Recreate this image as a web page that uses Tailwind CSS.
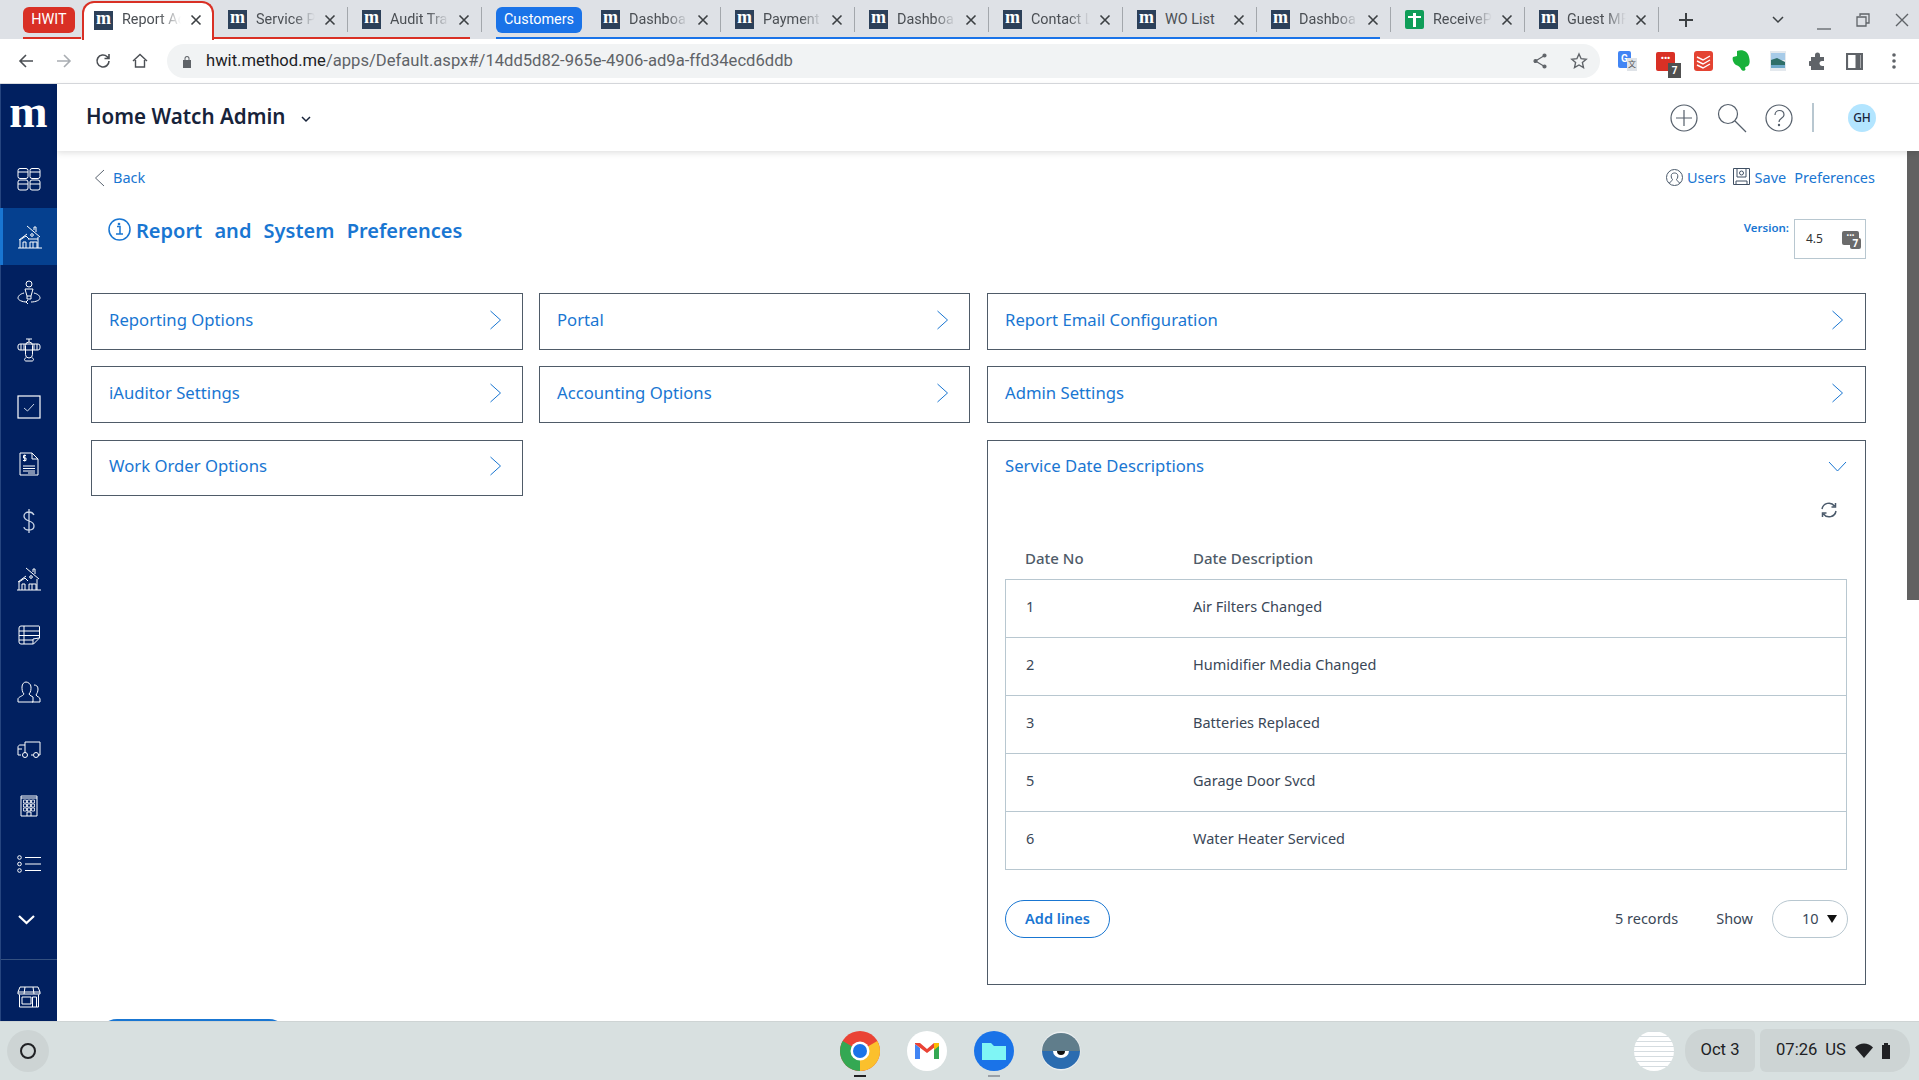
<!DOCTYPE html>
<html lang="en">
<head>
    <meta charset="UTF-8">
    <title>Report and System Preferences</title>
    <script src="https://cdn.jsdelivr.net/npm/@tailwindcss/browser@4"></script>
</head>
<body class="bg-white h-screen w-screen overflow-hidden flex flex-col font-['Noto_Sans',sans-serif]">

    <!-- tab strip -->
    <div class="relative h-[39px] shrink-0 bg-[#dee1e6] flex items-center pl-[23px] font-['Roboto',sans-serif] text-[14.4px] text-[#4b4f54]">
        <div class="absolute left-[23px] bottom-0 w-[58px] h-[2px] bg-[#d93025]"></div>
        <div class="absolute left-[214px] bottom-0 w-[256px] h-[2px] bg-[#d93025]"></div>
        <div class="absolute left-[496px] bottom-0 w-[884px] h-[2px] bg-[#1a73e8]"></div>

        <div class="w-[52px] h-[26px] rounded-md bg-[#d93025] text-white flex items-center justify-center">HWIT</div>

        <div class="ml-[7px] w-[132px] h-[39px] bg-white border-2 border-b-0 border-[#d93025] rounded-t-xl flex items-center pl-[10px] pb-[2px] -mb-[1px]">
            <div class="w-[19px] h-[19px] bg-[#2c4059] text-white font-['Liberation_Serif'] font-bold text-[18px] leading-[15px] text-center shrink-0">m</div>
            <div class="ml-[9px] w-[62px] overflow-hidden whitespace-nowrap [mask-image:linear-gradient(to_right,black_60%,transparent_95%)]">Report Ac</div>
            <svg class="ml-[6px] w-3 h-3 shrink-0" viewBox="0 0 12 12" stroke="#3c4043" stroke-width="1.6"><path d="M1.5 1.5l9 9M10.5 1.5l-9 9"/></svg>
        </div>

        <div class="w-[134px] h-[25px] flex items-center pl-[14px] border-r border-[#a3a7ac]">
            <div class="w-[19px] h-[19px] bg-[#2c4059] text-white font-['Liberation_Serif'] font-bold text-[18px] leading-[15px] text-center shrink-0">m</div>
            <div class="ml-[9px] w-[62px] overflow-hidden whitespace-nowrap [mask-image:linear-gradient(to_right,black_60%,transparent_95%)]">Service P</div>
            <svg class="ml-[6px] w-3 h-3 shrink-0" viewBox="0 0 12 12" stroke="#3c4043" stroke-width="1.6"><path d="M1.5 1.5l9 9M10.5 1.5l-9 9"/></svg>
        </div>
        <div class="w-[134px] h-[25px] flex items-center pl-[14px] border-r border-[#a3a7ac]">
            <div class="w-[19px] h-[19px] bg-[#2c4059] text-white font-['Liberation_Serif'] font-bold text-[18px] leading-[15px] text-center shrink-0">m</div>
            <div class="ml-[9px] w-[62px] overflow-hidden whitespace-nowrap [mask-image:linear-gradient(to_right,black_60%,transparent_95%)]">Audit Tra</div>
            <svg class="ml-[6px] w-3 h-3 shrink-0" viewBox="0 0 12 12" stroke="#3c4043" stroke-width="1.6"><path d="M1.5 1.5l9 9M10.5 1.5l-9 9"/></svg>
        </div>

        <div class="ml-[14px] w-[86px] h-[26px] rounded-md bg-[#1a73e8] text-white flex items-center justify-center">Customers</div>

        <div class="ml-[5px] w-[134px] h-[25px] flex items-center pl-[14px] border-r border-[#a3a7ac]">
            <div class="w-[19px] h-[19px] bg-[#2c4059] text-white font-['Liberation_Serif'] font-bold text-[18px] leading-[15px] text-center shrink-0">m</div>
            <div class="ml-[9px] w-[62px] overflow-hidden whitespace-nowrap [mask-image:linear-gradient(to_right,black_60%,transparent_95%)]">Dashboa</div>
            <svg class="ml-[6px] w-3 h-3 shrink-0" viewBox="0 0 12 12" stroke="#3c4043" stroke-width="1.6"><path d="M1.5 1.5l9 9M10.5 1.5l-9 9"/></svg>
        </div>
        <div class="w-[134px] h-[25px] flex items-center pl-[14px] border-r border-[#a3a7ac]">
            <div class="w-[19px] h-[19px] bg-[#2c4059] text-white font-['Liberation_Serif'] font-bold text-[18px] leading-[15px] text-center shrink-0">m</div>
            <div class="ml-[9px] w-[62px] overflow-hidden whitespace-nowrap [mask-image:linear-gradient(to_right,black_60%,transparent_95%)]">Payment</div>
            <svg class="ml-[6px] w-3 h-3 shrink-0" viewBox="0 0 12 12" stroke="#3c4043" stroke-width="1.6"><path d="M1.5 1.5l9 9M10.5 1.5l-9 9"/></svg>
        </div>
        <div class="w-[134px] h-[25px] flex items-center pl-[14px] border-r border-[#a3a7ac]">
            <div class="w-[19px] h-[19px] bg-[#2c4059] text-white font-['Liberation_Serif'] font-bold text-[18px] leading-[15px] text-center shrink-0">m</div>
            <div class="ml-[9px] w-[62px] overflow-hidden whitespace-nowrap [mask-image:linear-gradient(to_right,black_60%,transparent_95%)]">Dashboa</div>
            <svg class="ml-[6px] w-3 h-3 shrink-0" viewBox="0 0 12 12" stroke="#3c4043" stroke-width="1.6"><path d="M1.5 1.5l9 9M10.5 1.5l-9 9"/></svg>
        </div>
        <div class="w-[134px] h-[25px] flex items-center pl-[14px] border-r border-[#a3a7ac]">
            <div class="w-[19px] h-[19px] bg-[#2c4059] text-white font-['Liberation_Serif'] font-bold text-[18px] leading-[15px] text-center shrink-0">m</div>
            <div class="ml-[9px] w-[62px] overflow-hidden whitespace-nowrap [mask-image:linear-gradient(to_right,black_60%,transparent_95%)]">Contact L</div>
            <svg class="ml-[6px] w-3 h-3 shrink-0" viewBox="0 0 12 12" stroke="#3c4043" stroke-width="1.6"><path d="M1.5 1.5l9 9M10.5 1.5l-9 9"/></svg>
        </div>
        <div class="w-[134px] h-[25px] flex items-center pl-[14px] border-r border-[#a3a7ac]">
            <div class="w-[19px] h-[19px] bg-[#2c4059] text-white font-['Liberation_Serif'] font-bold text-[18px] leading-[15px] text-center shrink-0">m</div>
            <div class="ml-[9px] w-[62px] overflow-hidden whitespace-nowrap">WO List</div>
            <svg class="ml-[6px] w-3 h-3 shrink-0" viewBox="0 0 12 12" stroke="#3c4043" stroke-width="1.6"><path d="M1.5 1.5l9 9M10.5 1.5l-9 9"/></svg>
        </div>
        <div class="w-[134px] h-[25px] flex items-center pl-[14px] border-r border-[#a3a7ac]">
            <div class="w-[19px] h-[19px] bg-[#2c4059] text-white font-['Liberation_Serif'] font-bold text-[18px] leading-[15px] text-center shrink-0">m</div>
            <div class="ml-[9px] w-[62px] overflow-hidden whitespace-nowrap [mask-image:linear-gradient(to_right,black_60%,transparent_95%)]">Dashboa</div>
            <svg class="ml-[6px] w-3 h-3 shrink-0" viewBox="0 0 12 12" stroke="#3c4043" stroke-width="1.6"><path d="M1.5 1.5l9 9M10.5 1.5l-9 9"/></svg>
        </div>
        <div class="w-[134px] h-[25px] flex items-center pl-[14px] border-r border-[#a3a7ac]">
            <div class="relative w-[19px] h-[19px] rounded-[2px] bg-[#0f9d58] shrink-0">
                <div class="absolute left-[8px] top-[3px] w-[3px] h-[14px] bg-white"></div>
                <div class="absolute left-[3px] top-[6px] w-[13px] h-[2px] bg-white"></div>
            </div>
            <div class="ml-[9px] w-[62px] overflow-hidden whitespace-nowrap [mask-image:linear-gradient(to_right,black_60%,transparent_95%)]">ReceiveP</div>
            <svg class="ml-[6px] w-3 h-3 shrink-0" viewBox="0 0 12 12" stroke="#3c4043" stroke-width="1.6"><path d="M1.5 1.5l9 9M10.5 1.5l-9 9"/></svg>
        </div>
        <div class="w-[134px] h-[25px] flex items-center pl-[14px] border-r border-[#a3a7ac]">
            <div class="w-[19px] h-[19px] bg-[#2c4059] text-white font-['Liberation_Serif'] font-bold text-[18px] leading-[15px] text-center shrink-0">m</div>
            <div class="ml-[9px] w-[62px] overflow-hidden whitespace-nowrap [mask-image:linear-gradient(to_right,black_60%,transparent_95%)]">Guest MF</div>
            <svg class="ml-[6px] w-3 h-3 shrink-0" viewBox="0 0 12 12" stroke="#3c4043" stroke-width="1.6"><path d="M1.5 1.5l9 9M10.5 1.5l-9 9"/></svg>
        </div>

        <svg class="ml-[19px] w-[16px] h-[16px]" viewBox="0 0 16 16" stroke="#3c4043" stroke-width="2"><path d="M8 1v14M1 8h14"/></svg>
        <svg class="ml-[78px] w-[12px] h-[8px]" viewBox="0 0 12 8" fill="none" stroke="#3c4043" stroke-width="1.5"><path d="M1 1l5 5 5-5"/></svg>
        <svg class="ml-[33px] w-[14px] h-[14px] mt-[8px]" viewBox="0 0 14 14" stroke="#5f6368" stroke-width="1.3"><path d="M0 12h14"/></svg>
        <svg class="ml-[25px] w-[14px] h-[14px]" viewBox="0 0 14 14" fill="none" stroke="#5f6368" stroke-width="1.3"><path d="M4 3V1h9v9h-3M1 4h9v9H1z"/></svg>
        <svg class="ml-[25px] w-[14px] h-[14px]" viewBox="0 0 14 14" stroke="#5f6368" stroke-width="1.4"><path d="M1 1l12 12M13 1L1 13"/></svg>
    </div>

    <!-- address bar -->
    <div class="h-[45px] shrink-0 bg-white border-b border-[#dadce0] flex items-center font-['Roboto',sans-serif]">
        <div class="w-[167px] flex items-center shrink-0 pl-[18px]">
            <svg class="w-4 h-4" viewBox="0 0 16 16" fill="none" stroke="#4b4f54" stroke-width="1.6"><path d="M15 8H2M8 2L2 8l6 6"/></svg>
            <svg class="w-4 h-4 ml-[22px]" viewBox="0 0 16 16" fill="none" stroke="#a9adb2" stroke-width="1.6"><path d="M1 8h13M8 2l6 6-6 6"/></svg>
            <svg class="w-4 h-4 ml-[23px]" viewBox="0 0 16 16" fill="none" stroke="#4b4f54" stroke-width="1.6"><path d="M14 8a6 6 0 1 1-1.8-4.3L14 5.500M14 1v4.500H9.500"/></svg>
            <svg class="w-4 h-4 ml-[21px]" viewBox="0 0 16 16" fill="none" stroke="#4b4f54" stroke-width="1.4"><path d="M1 8l7-6.500L15 8M3.500 7v7h9V7"/></svg>
        </div>
        <div class="w-[1433px] h-[34px] rounded-full bg-[#f1f3f4] flex items-center pl-[15px] pr-[12px] text-[16.6px] shrink-0">
            <svg class="w-[10px] h-[13px]" viewBox="0 0 10 13" fill="#5f6368"><path d="M1 5h8v8H1zM2.500 5V3.500a2.500 2.500 0 0 1 5 0V5h-1V3.500a1.500 1.500 0 0 0-3 0V5z"/></svg>
            <span class="ml-[14px] text-[#202124] whitespace-nowrap">hwit.method.me<span class="text-[#5f6368]">/apps/Default.aspx#/14dd5d82-965e-4906-ad9a-ffd34ecd6ddb</span></span>
            <svg class="ml-auto w-4 h-4" viewBox="0 0 16 16" fill="#5f6368" stroke="#5f6368" stroke-width="1.2"><path d="M12.500 2.500L3.500 8l9 5.500" fill="none"/><circle cx="12.500" cy="2.500" r="1.500"/><circle cx="3.500" cy="8" r="1.500"/><circle cx="12.500" cy="13.500" r="1.500"/></svg>
            <svg class="ml-[22px] w-[18px] h-[18px]" viewBox="0 0 18 18" fill="none" stroke="#5f6368" stroke-width="1.400"><path d="M9 2l2.100 4.700 5.100.500-3.800 3.400 1.100 5L9 13l-4.500 2.600 1.100-5L1.800 7.200l5.100-.500z"/></svg>
        </div>
        <div class="flex items-center pl-[18px] gap-[19px]">
            <div class="relative w-[19px] h-[20px]">
                <div class="w-[13px] h-[17px] rounded-[2px] bg-[#4285f4] text-white text-[10px] font-bold text-center leading-[16px]">G</div>
                <div class="absolute right-0 bottom-0 w-[10px] h-[13px] bg-[#dfe3e8] text-[#555] text-[8px] text-center leading-[12px] font-['Noto_Sans_CJK_SC',sans-serif]">文</div>
            </div>
            <div class="relative w-[19px] h-[19px] rounded-[2px] bg-[#d93025] text-white text-[9px] leading-[13px] text-center font-bold">•••
                <div class="absolute -right-[6px] -bottom-[7px] w-[13px] h-[15px] bg-[#505050] text-white text-[10px] leading-[15px]">7</div>
            </div>
            <svg class="w-[19px] h-[20px]" viewBox="0 0 19 20"><rect width="19" height="20" rx="3" fill="#e44332"/><path d="M3 6l6 3 7-4M3 10l6 3 7-4M3 14l6 3 7-4" fill="none" stroke="#fff" stroke-width="1.4"/></svg>
            <svg class="w-[19px] h-[22px]" viewBox="0 0 19 22"><path d="M5 1c6-2 11 1 12 6 1 4 1 7-1 9-2 1-2 0-3 2 2 3-3 4-4 1-1-2-2-3-5-4-3-2-4-6-3-8l4-1z" fill="#18b13a"/></svg>
            <svg class="w-[16px] h-[20px]" viewBox="0 0 16 20"><rect width="16" height="20" fill="#e4e9ee"/><rect x="1" y="2" width="14" height="7" fill="#a7cbe8"/><path d="M1 9l6-2 8 4v5H1z" fill="#2f6f68"/><rect x="1" y="14" width="14" height="3" fill="#6fa9c9"/></svg>
            <svg class="ml-[4px] w-[18px] h-[18px]" viewBox="0 0 18 18" fill="#5f6368"><path d="M2 5h4V3a2.500 2.500 0 0 1 5 0v2h4v4h-2a2.500 2.500 0 0 0 0 5h2v4H2v-4H1a2.500 2.500 0 0 1 0-5h1z"/></svg>
            <svg class="w-[17px] h-[17px]" viewBox="0 0 17 17" fill="none" stroke="#5f6368" stroke-width="2.200"><path d="M1 1h15v15H1z"/><path d="M12 1v15" stroke-width="5"/></svg>
            <svg class="ml-[10px] w-[4px] h-[16px]" viewBox="0 0 4 16" fill="#5f6368"><circle cx="2" cy="2" r="1.800"/><circle cx="2" cy="8" r="1.800"/><circle cx="2" cy="14" r="1.800"/></svg>
        </div>
    </div>

    <div class="flex-1 flex min-h-0">
        <!-- sidebar -->
        <div class="w-[57px] shrink-0 bg-[#012060] border-l border-[#26457f] text-white flex flex-col">
            <div class="h-[67px] flex items-center justify-center font-['Liberation_Serif'] font-bold text-[46px] leading-none pb-[11px] pr-px">m</div>

            <div class="h-[57px] flex items-center justify-center pb-[2px]">
                <svg class="w-[24px] h-[24px]" viewBox="0 0 24 24" fill="none" stroke="#fff" stroke-width="1"><rect x="1" y="1.500" width="10" height="10" rx="2"/><rect x="13" y="1.500" width="10" height="10" rx="2"/><rect x="1" y="13" width="10" height="10" rx="2"/><rect x="13" y="13" width="10" height="10" rx="2"/><path d="M1 5h10M13 5h10M1 17h10M13 17h10"/></svg>
            </div>
            <div class="h-[57px] flex items-center justify-center bg-[#05408f] border-l-[3px] border-[#1976d2] -ml-px">
                <svg class="w-[24px] h-[24px]" viewBox="0 0 24 24" fill="none" stroke="#fff" stroke-width="1"><path d="M0 23h24M2 23V15l6-4 3 3M1 15l8-6M9 1l13 11M16 5v-3h2v5M20 12v11M5 23v-6h3v6M12 23v-6h7v6M15 17v6"/><circle cx="14" cy="10" r="1.300"/><path d="M10 14h10" /></svg>
            </div>
            <div class="h-[57px] flex items-center justify-center pb-[3px]">
                <svg class="w-[24px] h-[24px]" viewBox="0 0 24 24" fill="none" stroke="#fff" stroke-width="1"><circle cx="12" cy="4" r="3"/><path d="M8 9h8l-2 7h-4zM10 16v3h4v-3M7 13c-4 1-6 3-6 5 0 2 4 4 9 4M17 13c4 1 6 3 6 5 0 2-4 4-9 4M11 20l-2 2 2 2"/></svg>
            </div>
            <div class="h-[57px] flex items-center justify-center pb-[2px]">
                <svg class="w-[24px] h-[24px]" viewBox="0 0 24 24" fill="none" stroke="#fff" stroke-width="1"><rect x="1" y="6" width="22" height="6" rx="2"/><path d="M9 1h6M12 1v3M9 23c-2 0-2-3 0-3M15 23c2 0 2-3 0-3M9 23h6M4 6v6M7 6v6M17 6v6M20 6v6"/><rect x="8.500" y="4" width="7" height="16" rx="3.500"/></svg>
            </div>
            <div class="h-[57px] flex items-center justify-center pb-[2px]">
                <svg class="w-[24px] h-[24px]" viewBox="0 0 24 24" fill="none" stroke="#fff" stroke-width="1"><rect x="1" y="1" width="22" height="22" stroke-width="1.200"/><path d="M7 13l3.500 3L17 9" stroke="#cbd5e6"/></svg>
            </div>
            <div class="h-[57px] flex items-center justify-center pb-[2px]">
                <svg class="w-[20px] h-[24px]" viewBox="0 0 20 24" fill="none" stroke="#fff" stroke-width="1"><path d="M1 1h12l6 6v16H1zM13 1v6h6M4 14h12M4 16.500h12M4 19h12M9 21h7"/><path d="M7 3.500H4.500v2.500H7v2.500H4M5.700 2.500v7" /></svg>
            </div>
            <div class="h-[57px] flex items-center justify-center pb-[2px]">
                <svg class="w-[14px] h-[24px]" viewBox="0 0 14 24" fill="none" stroke="#cbd5e6" stroke-width="1.300"><path d="M12 6c-1-2-3-3-5-3-3 0-5 2-5 4s2 4 5 5 5 2 5 5-2 4-5 4-5-1-5-3M7 0v24"/></svg>
            </div>
            <div class="h-[57px] flex items-center justify-center">
                <svg class="w-[24px] h-[24px]" viewBox="0 0 24 24" fill="none" stroke="#fff" stroke-width="1"><path d="M0 23h24M2 23V15l6-4 3 3M1 15l8-6M9 1l13 11M16 5v-3h2v5M20 12v11M5 23v-6h3v6M12 23v-6h7v6M15 17v6"/><circle cx="14" cy="10" r="1.300"/></svg>
            </div>
            <div class="h-[57px] flex items-center justify-center pb-[2px]">
                <svg class="w-[22px] h-[20px]" viewBox="0 0 22 20" fill="none" stroke="#fff" stroke-width="1"><path d="M3 1h18a1 1 0 0 1 .500.500V13l-6 6H3a2 2 0 0 1-2-2V3a2 2 0 0 1 2-2zM1 6h20M1 10.500h20M1 15h14M6 1v18M15 19v-5l6-1"/></svg>
            </div>
            <div class="h-[57px] flex items-center justify-center pb-[2px]">
                <svg class="w-[24px] h-[22px]" viewBox="0 0 24 22" fill="none" stroke="#fff" stroke-width="1"><path d="M1 21v-3c0-2 5-3 6-5-2-2-2-5-2-7 0-3 2-5 4-5s5 2 5 5c0 2 0 5-2 7 1 2 3 2 4 3v5zM15 21h8v-3c0-2-3-2-4-4 1-2 2-3 2-6 0-3-2-4-4-4"/></svg>
            </div>
            <div class="h-[57px] flex items-center justify-center pb-[3px]">
                <svg class="w-[24px] h-[20px]" viewBox="0 0 24 20" fill="none" stroke="#fff" stroke-width="1"><path d="M8 15V4h15v13h-2M14 17h2M4 17H1V9c0-1 1-2 2-2h5M1 11h4"/><circle cx="8" cy="17" r="2.500"/><circle cx="19" cy="17" r="2.500"/></svg>
            </div>
            <div class="h-[57px] flex items-center justify-center pb-[2px]">
                <svg class="w-[18px] h-[22px]" viewBox="0 0 18 22" fill="none" stroke="#fff" stroke-width="1"><path d="M1 1h16v20H1zM7 21v-4h4v4M1 3h16"/><path d="M3.500 5h3v3h-3zM7.500 5h3v3h-3zM11.500 5h3v3h-3zM3.500 9h3v3h-3zM7.500 9h3v3h-3zM11.500 9h3v3h-3zM3.500 13h3v3h-3zM7.500 13h3v3h-3zM11.500 13h3v3h-3z" stroke-width="0.800"/></svg>
            </div>
            <div class="h-[57px] flex items-center justify-center">
                <svg class="w-[24px] h-[18px]" viewBox="0 0 24 18" fill="none" stroke="#fff" stroke-width="1"><circle cx="2.500" cy="2.500" r="1.800"/><circle cx="2.500" cy="9" r="1.800"/><circle cx="2.500" cy="15.500" r="1.800"/><path d="M8 2.500h16M8 9h16M8 15.500h16"/></svg>
            </div>
            <div class="h-[57px] flex items-center justify-center pr-[6px] pb-[2px]">
                <svg class="w-[17px] h-[10px]" viewBox="0 0 17 10" fill="none" stroke="#fff" stroke-width="2.200"><path d="M1 1l7.500 7L16 1"/></svg>
            </div>

            <div class="mt-[10px] border-t border-[#34507f] flex-1 flex items-center justify-center pt-[13px]">
                <svg class="w-[24px] h-[22px]" viewBox="0 0 24 22" fill="none" stroke="#fff" stroke-width="1"><path d="M3 1h18l2 5v2H1V6zM1 6h22M8 1L7 8M16 1l1 7M2.500 8.500V21h19V8.500M5 11h9v7H5zM15.500 21V11h4v10"/></svg>
            </div>
        </div>

        <!-- main column -->
        <div class="flex-1 flex flex-col min-w-0">
            <!-- app header -->
            <div class="relative z-10 h-[67px] shrink-0 bg-white shadow-[0_2px_6px_rgba(0,0,0,0.12)] flex items-center pl-[29px] pr-[43px]">
                <span class="text-[20.6px] font-semibold text-[#17233a] -mt-[2px]">Home Watch Admin</span>
                <svg class="ml-[16px] mt-[3px] w-[10px] h-[7px]" viewBox="0 0 10 7" fill="none" stroke="#17233a" stroke-width="1.500"><path d="M1 1l4 4 4-4"/></svg>
                <svg class="ml-auto w-[28px] h-[28px]" viewBox="0 0 28 28" fill="none" stroke="#555f6b" stroke-width="1.200"><circle cx="14" cy="14" r="13"/><path d="M14 6v16M6 14h16"/></svg>
                <svg class="ml-[19px] w-[30px] h-[30px]" viewBox="0 0 30 30" fill="none" stroke="#555f6b" stroke-width="1.200"><circle cx="11" cy="11" r="9.500"/><path d="M18 18l11 11"/></svg>
                <svg class="ml-[18px] w-[28px] h-[28px]" viewBox="0 0 28 28" fill="none" stroke="#555f6b" stroke-width="1.200"><circle cx="14" cy="14" r="13"/><path d="M10 11c0-6 9-6 9 0 0 3-5 3-5 7"/><circle cx="14" cy="21" r=".6"/></svg>
                <div class="ml-[19px] w-[2px] h-[29px] bg-[#b8c7d0]"></div>
                <div class="ml-[34px] w-[28px] h-[28px] rounded-full bg-[#b3e5ff] text-[#17233a] text-[12px] font-medium flex items-center justify-center">GH</div>
            </div>

            <div class="flex-1 flex min-h-0">
                <!-- scrolling content -->
                <div class="flex-1 min-w-0 overflow-hidden pt-[15px] pl-[34px] pr-[41px] text-[#1976d2]">
                    <div class="h-[24px] -mr-[9px] flex items-center text-[14.5px]">
                        <svg class="ml-[3px] w-[11px] h-[18px]" viewBox="0 0 11 18" fill="none" stroke="#5a6470" stroke-width="1"><path d="M10 1L1.500 9l8.500 8"/></svg>
                        <span class="ml-[8px]">Back</span>
                        <svg class="ml-auto w-[17px] h-[17px] -mt-[2px]" viewBox="0 0 17 17" fill="none" stroke="#4b5a6b" stroke-width="1"><circle cx="8.500" cy="8.500" r="8"/><path d="M3.500 14c1-2 3-2 3-3.500C5 9 5 7 5.500 5.500c1-2 5-2 6 0 .5 1.500.5 3.500-1 5 0 1.500 2 1.500 3 3.500"/></svg>
                        <span class="ml-[4px]">Users</span>
                        <svg class="ml-[7px] w-[17px] h-[17px] -mt-[4px]" viewBox="0 0 17 17" fill="none" stroke="#3f4f63" stroke-width="1"><path d="M.5.500h16v16H.5zM4 .500V9h9V.500M3 16v-3h11v3"/><circle cx="8.500" cy="5" r="2"/></svg>
                        <span class="ml-[5px]">Save</span>
                        <span class="ml-[8px]">Preferences</span>
                    </div>

                    <div class="mt-[29px] h-[40px] flex items-start">
                        <svg class="ml-[17px] -mt-px w-[23px] h-[23px]" viewBox="0 0 23 23" fill="none" stroke="#1976d2" stroke-width="1.500"><circle cx="11.500" cy="11.500" r="10.500"/><path d="M9 8.500h3v7M8 16h7"/><circle cx="11" cy="6" r=".6"/></svg>
                        <h1 class="ml-[5px] -mt-[3px] text-[20px] font-semibold [word-spacing:7px] whitespace-nowrap">Report and System Preferences</h1>
                        <span class="ml-auto text-[11.5px] font-semibold">Version:</span>
                        <div class="ml-[5px] w-[72px] h-[40px] border border-[#b8c7d0] flex items-center pl-[11px] text-[12px] text-[#333]">
                            4.5
                            <div class="relative ml-[19px] w-[17px] h-[14px] -mt-[3px] rounded-[2px] bg-[#6b6b6b] text-white text-[7px] leading-[9px] text-center">•••
                                <div class="absolute -right-[2px] -bottom-[4px] w-[11px] h-[11px] rounded-[2px] bg-[#6b6b6b] text-white text-[10px] font-bold leading-[11px]">7</div>
                            </div>
                        </div>
                    </div>

                    <div class="mt-[34px] grid grid-cols-[432px_432px_879px] gap-x-4 gap-y-4 items-start text-[16.7px]">
                        <div class="h-[57px] border border-[#4f5b68] flex items-center justify-between pl-[17px] pr-[20px] pb-[3px]">
                            Reporting Options
                            <svg class="w-[13px] h-[20px]" viewBox="0 0 13 20" fill="none" stroke="#1976d2" stroke-width="1"><path d="M1.500 1l10 9-10 9"/></svg>
                        </div>
                        <div class="h-[57px] w-[431px] border border-[#4f5b68] flex items-center justify-between pl-[17px] pr-[20px] pb-[3px]">
                            Portal
                            <svg class="w-[13px] h-[20px]" viewBox="0 0 13 20" fill="none" stroke="#1976d2" stroke-width="1"><path d="M1.500 1l10 9-10 9"/></svg>
                        </div>
                        <div class="h-[57px] border border-[#4f5b68] flex items-center justify-between pl-[17px] pr-[21px] pb-[3px]">
                            Report Email Configuration
                            <svg class="w-[13px] h-[20px]" viewBox="0 0 13 20" fill="none" stroke="#1976d2" stroke-width="1"><path d="M1.500 1l10 9-10 9"/></svg>
                        </div>
                        <div class="h-[57px] border border-[#4f5b68] flex items-center justify-between pl-[17px] pr-[20px] pb-[3px]">
                            iAuditor Settings
                            <svg class="w-[13px] h-[20px]" viewBox="0 0 13 20" fill="none" stroke="#1976d2" stroke-width="1"><path d="M1.500 1l10 9-10 9"/></svg>
                        </div>
                        <div class="h-[57px] w-[431px] border border-[#4f5b68] flex items-center justify-between pl-[17px] pr-[20px] pb-[3px]">
                            Accounting Options
                            <svg class="w-[13px] h-[20px]" viewBox="0 0 13 20" fill="none" stroke="#1976d2" stroke-width="1"><path d="M1.500 1l10 9-10 9"/></svg>
                        </div>
                        <div class="h-[57px] border border-[#4f5b68] flex items-center justify-between pl-[17px] pr-[21px] pb-[3px]">
                            Admin Settings
                            <svg class="w-[13px] h-[20px]" viewBox="0 0 13 20" fill="none" stroke="#1976d2" stroke-width="1"><path d="M1.500 1l10 9-10 9"/></svg>
                        </div>
                        <div class="mt-px h-[56px] border border-[#4f5b68] flex items-center justify-between pl-[17px] pr-[20px] pb-[4px]">
                            Work Order Options
                            <svg class="w-[13px] h-[20px]" viewBox="0 0 13 20" fill="none" stroke="#1976d2" stroke-width="1"><path d="M1.500 1l10 9-10 9"/></svg>
                        </div>
                        <div></div>

                        <!-- service date panel -->
                        <div class="mt-px h-[545px] border border-[#4f5b68] pl-[17px] pr-[18px] flex flex-col">
                            <div class="h-[50px] mb-[10px] shrink-0 flex items-center justify-between">
                                Service Date Descriptions
                                <svg class="w-[19px] h-[11px]" viewBox="0 0 19 11" fill="none" stroke="#1976d2" stroke-width="1"><path d="M1 1l8.500 9L18 1"/></svg>
                            </div>
                            <div class="h-[20px] flex justify-end pr-[9px] shrink-0">
                                <svg class="w-[18px] h-[18px]" viewBox="0 0 18 18" fill="none" stroke="#4b5a6b" stroke-width="1.500"><path d="M2 8a7 7 0 0 1 12.500-3M16 10a7 7 0 0 1-12.500 3M11.500 6h4V2M6.500 12h-4v4"/></svg>
                            </div>
                            <div class="mt-[23px] h-[35px] shrink-0 flex items-center pl-[20px] text-[15px] font-medium text-[#4f5b68] pb-[6px]">
                                <span class="w-[168px]">Date No</span>
                                <span>Date Description</span>
                            </div>
                            <div class="border border-[#b8c7d0] border-b-0 text-[14.5px] text-[#3a4757] shrink-0">
                                <div class="h-[58px] border-b border-[#b8c7d0] flex items-center pl-[20px] pb-[3px]"><span class="w-[167px]">1</span>Air Filters Changed</div>
                                <div class="h-[58px] border-b border-[#b8c7d0] flex items-center pl-[20px] pb-[3px]"><span class="w-[167px]">2</span>Humidifier Media Changed</div>
                                <div class="h-[58px] border-b border-[#b8c7d0] flex items-center pl-[20px] pb-[3px]"><span class="w-[167px]">3</span>Batteries Replaced</div>
                                <div class="h-[58px] border-b border-[#b8c7d0] flex items-center pl-[20px] pb-[3px]"><span class="w-[167px]">5</span>Garage Door Svcd</div>
                                <div class="h-[58px] border-b border-[#b8c7d0] flex items-center pl-[20px] pb-[3px]"><span class="w-[167px]">6</span>Water Heater Serviced</div>
                            </div>
                            <div class="mt-[30px] flex items-center text-[14.5px] text-[#3a4757]">
                                <button class="w-[105px] h-[38px] rounded-full border border-[#1976d2] text-[#1976d2] font-semibold">Add lines</button>
                                <span class="ml-auto">5 records</span>
                                <span class="ml-[38px]">Show</span>
                                <div class="ml-[19px] -mr-[1px] w-[76px] h-[38px] rounded-full border border-[#b8c7d0] flex items-center pl-[29px]">
                                    10
                                    <svg class="ml-[8px] w-[10px] h-[8px]" viewBox="0 0 10 8" fill="#111"><path d="M0 0h10L5 8z"/></svg>
                                </div>
                            </div>
                        </div>
                    </div>

                    <!-- button below the fold, only its top edge shows -->
                    <div class="mt-[34px] ml-[7px] w-[190px] h-[38px] rounded-full bg-[#1976d2]"></div>
                </div>

                <!-- page scrollbar -->
                <div class="w-[12px] shrink-0 bg-white">
                    <div class="h-[449px] bg-[#616161]"></div>
                </div>
            </div>
        </div>
    </div>

    <!-- chromeos shelf -->
    <div class="h-[59px] shrink-0 bg-[#d8e0e0] border-t border-[#ced4d4] pb-[1px] grid grid-cols-[1fr_auto_1fr] items-center font-['Roboto',sans-serif] text-[16.6px] text-[#202124]">
        <div class="pl-[7px]">
            <div class="w-[42px] h-[42px] rounded-full bg-[#cdd4d4] flex items-center justify-center">
                <div class="w-[16px] h-[16px] rounded-full border-2 border-[#202124]"></div>
            </div>
        </div>
        <div class="flex items-center gap-[27px] pl-[1px]">
            <div class="relative">
                <svg class="w-[40px] h-[40px]" viewBox="0 0 40 40"><circle cx="20" cy="20" r="20" fill="#ea4335"/><path d="M20 20L37.300 10A20 20 0 0 1 20 40z" fill="#fbc02d"/><path d="M20 20L20 40A20 20 0 0 1 2.700 10z" fill="#34a853"/><circle cx="20" cy="20" r="9.500" fill="#fff"/><circle cx="20" cy="20" r="7" fill="#1a73e8"/></svg>
                <div class="absolute left-[14px] -bottom-[6px] w-[12px] h-[2px] bg-[#202124]"></div>
            </div>
            <svg class="w-[40px] h-[40px]" viewBox="0 0 40 40"><circle cx="20" cy="20" r="20" fill="#fff"/><path d="M8 13v15h5V17z" fill="#4285f4"/><path d="M27 17v11h5V13z" fill="#34a853"/><path d="M8 13l12 9 12-9v-1l-5 0-7 6-7-6-5 0z" fill="#ea4335"/><path d="M27 12h5v3l-5 4z" fill="#fbbc04"/></svg>
            <div class="relative">
                <svg class="w-[40px] h-[40px]" viewBox="0 0 40 40"><circle cx="20" cy="20" r="20" fill="#1a73e8"/><path d="M8 12h9l3 3h12v14H8z" fill="#7ff5f5"/></svg>
                <div class="absolute left-[14px] -bottom-[6px] w-[12px] h-[2px] bg-[#9aa0a6]"></div>
            </div>
            <svg class="w-[40px] h-[40px]" viewBox="0 0 40 40"><circle cx="20" cy="20" r="19.500" fill="#eceff1"/><path d="M1 20a19 18 0 0 1 38 0z" fill="#607d8b"/><path d="M1 20h38a19 18 0 0 1-38 0z" fill="#2b6cb0"/><path d="M12 20a8 7 0 0 0 16 0z" fill="#fff"/><path d="M16 20a4 4 0 0 0 8 0z" fill="#111"/></svg>
        </div>
        <div class="flex items-center justify-end pr-[9px]">
            <div class="w-[40px] h-[40px] rounded-full bg-[repeating-linear-gradient(0deg,#fff_0,#fff_4px,#d5dce0_4px,#d5dce0_5px)]"></div>
            <div class="ml-[11px] w-[70px] h-[43px] rounded-l-[20px] rounded-r-md bg-[#cdd4d4] flex items-center justify-center">Oct 3</div>
            <div class="ml-[5px] w-[150px] h-[43px] rounded-r-[20px] rounded-l-md bg-[#cdd4d4] flex items-center pl-[16px]">
                07:26
                <span class="ml-[8px]">US</span>
                <svg class="ml-[9px] w-[18px] h-[15px]" viewBox="0 0 18 15" fill="#202124"><path d="M0 4.500C5-1 13-1 18 4.500L9 15z"/></svg>
                <svg class="ml-[8px] w-[10px] h-[16px]" viewBox="0 0 10 16" fill="#202124"><path d="M3 0h4v2h2v14H1V2h2z"/></svg>
            </div>
        </div>
    </div>

</body>
</html>
